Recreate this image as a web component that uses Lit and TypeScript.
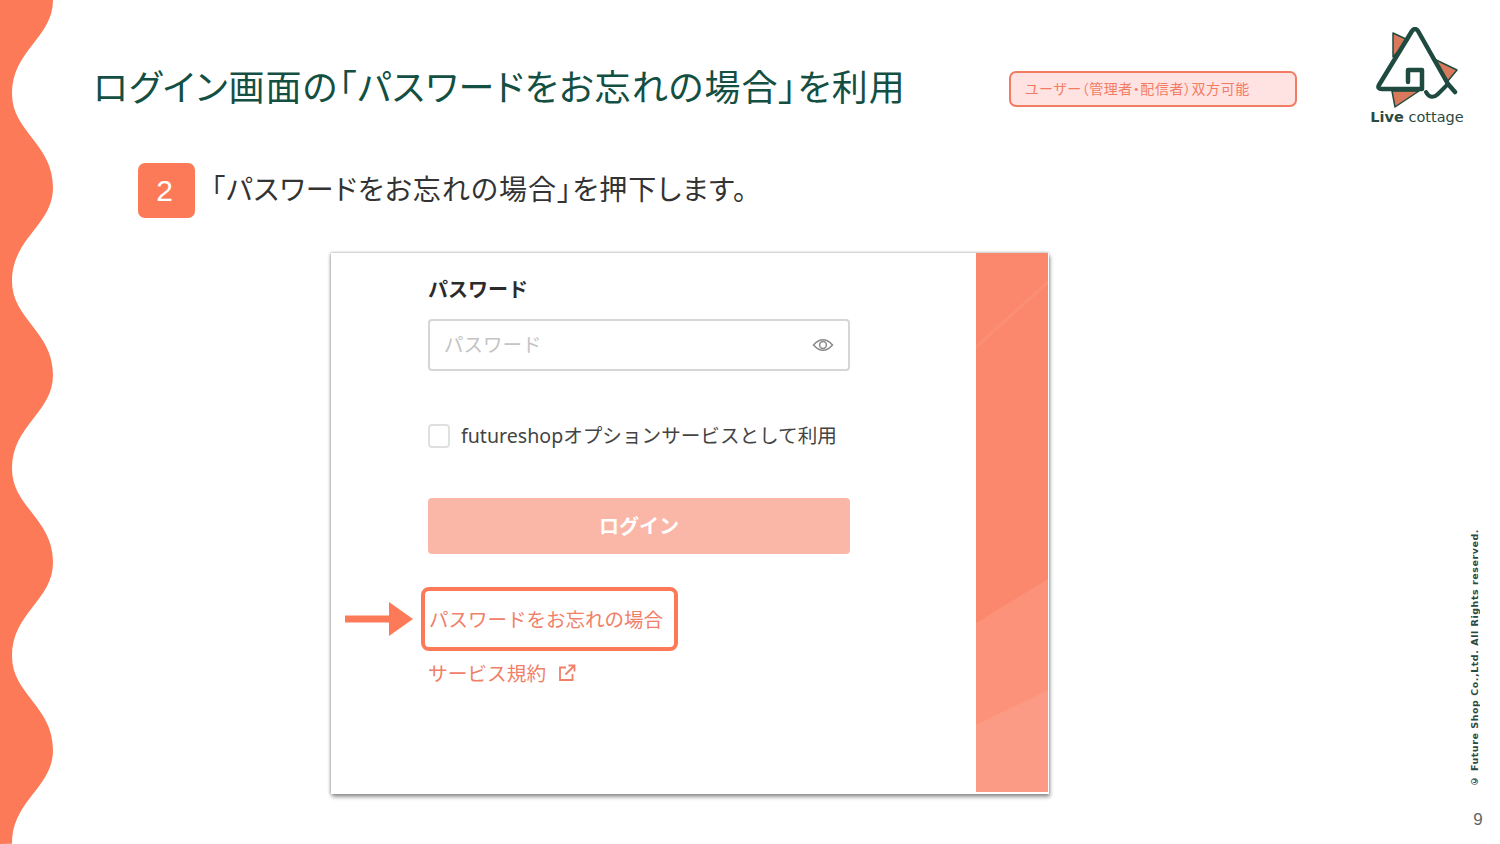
import { css, html, svg, LitElement } from 'lit';
import { customElement } from 'lit/decorators.js';

const wavePath = () => {
  // one bulge every 187.5px, from x=53 out to x=12 and back
  let d = 'M0 0 L53 0';
  for (let i = 0; i < 9; i++) {
    const y = i * 93.75;
    const out = i % 2 === 0;
    const from = out ? 53 : 12;
    const to = out ? 12 : 53;
    d += ` C${from} ${y + 38} ${to} ${y + 50} ${to} ${y + 93.75}`;
  }
  return d + ' L0 844 Z';
};

@customElement('app-root')
export class AppRoot extends LitElement {
  render() {
    return html`
      <svg class="wave" width="60" height="844" viewBox="0 0 60 844">
        ${svg`<path d=${wavePath()} fill="#fd7a58"></path>`}
      </svg>

      <header class="head">
        <h1>ログイン画面の「パスワードをお忘れの場合」を利用</h1>
        <span class="pill">ユーザー（管理者・配信者）双方可能</span>
        <div class="logo">
          <svg width="90" height="84" viewBox="0 0 90 84">
            <path d="M21 6 L36 13 L21 30 Z" fill="#d9795c" stroke="#1f4a40" stroke-width="1.5" stroke-linejoin="round"></path>
            <path d="M60 31 L85 43 L75 55 Z" fill="#d9795c" stroke="#1f4a40" stroke-width="1.5" stroke-linejoin="round"></path>
            <path d="M20 64 L23 80 L47 64 Z" fill="#d9795c" stroke="#1f4a40" stroke-width="1.5" stroke-linejoin="round"></path>
            <path d="M36 55 L36 43 L50 43 L50 62 L10 62 Q5 62 7 58 L40 4 Q43 0 46 4 L76 57 L83 65" fill="none" stroke="#1f4a40" stroke-width="4.5" stroke-linecap="round" stroke-linejoin="round"></path>
            <path d="M54 65 C57 71 62 71 66 67 L75 58" fill="none" stroke="#1f4a40" stroke-width="4" stroke-linecap="round" stroke-linejoin="round"></path>
          </svg>
          <div class="logo-name"><b>Live</b> cottage</div>
        </div>
      </header>

      <div class="step">
        <span class="num">2</span>
        <p>「パスワードをお忘れの場合」を押下します。</p>
      </div>

      <div class="shot-row">
        <section class="shot">
          <div class="form">
            <div class="label">パスワード</div>
            <div class="input">
              <span>パスワード</span>
              <svg width="22" height="16" viewBox="0 0 22 16">
                <path d="M1.5 8 Q11 -2.5 20.5 8 Q11 18.5 1.5 8 Z" fill="none" stroke="#8a8a8a" stroke-width="1.5"></path>
                <circle cx="11" cy="8" r="3.4" fill="none" stroke="#8a8a8a" stroke-width="1.5"></circle>
              </svg>
            </div>
            <label class="check"><i></i>futureshopオプションサービスとして利用</label>
            <div class="btn">ログイン</div>
            <div class="forgot-row">
              <svg class="arrow" width="68" height="34" viewBox="0 0 68 34">
                <path d="M0 13.5 H44 V0 L68 17 L44 34 V20.5 H0 Z" fill="#fd7a58"></path>
              </svg>
              <div class="forgot">パスワードをお忘れの場合</div>
            </div>
            <div class="terms">
              サービス規約
              <svg width="18" height="18" viewBox="0 0 18 18">
                <path d="M8 3.5 H2 V16 H14.5 V10 M7.5 10.5 L16 2 M10.5 1.5 H16.5 V7.5" fill="none" stroke="#f0806a" stroke-width="1.8"></path>
              </svg>
            </div>
          </div>
          <svg class="band" width="72" height="539" viewBox="0 0 72 539">
            <rect width="72" height="539" fill="#fb886c"></rect>
            <path d="M0 92 L72 27 L72 31 L0 96 Z" fill="#fff" opacity="0.06"></path>
            <path d="M0 370 L72 326 L72 539 L0 539 Z" fill="#fff" opacity="0.09"></path>
            <path d="M0 472 L72 437 L72 539 L0 539 Z" fill="#fff" opacity="0.09"></path>
          </svg>
        </section>
      </div>

      <footer class="foot">
        <small class="copy">© Future Shop Co.,Ltd. All Rights reserved.</small>
        <span class="page">9</span>
      </footer>
    `;
  }

  static styles = css`
    :host {
      display: flex;
      flex-direction: column;
      position: relative;
      width: 1500px;
      height: 844px;
      overflow: hidden;
      background: #fff;
      font-family: "Noto Sans CJK JP", "Liberation Sans", sans-serif;
    }
    .wave {
      position: absolute;
      left: 0;
      top: 0;
    }
    .head {
      display: flex;
      align-items: flex-start;
      height: 163px;
      padding: 27px 0 0 93px;
      box-sizing: border-box;
    }
    h1 {
      width: 916px;
      margin: 33px 0 0;
      font-size: 36px;
      line-height: 50px;
      font-weight: 400;
      letter-spacing: 1.03px;
      color: #134f42;
      white-space: nowrap;
      font-feature-settings: "palt";
    }
    .pill {
      width: 288px;
      height: 36px;
      margin-top: 44px;
      padding-left: 14px;
      box-sizing: border-box;
      border: 2px solid #f27c63;
      border-radius: 7px;
      background: #ffe3e3;
      color: #f27c63;
      font-size: 14px;
      line-height: 31px;
      letter-spacing: 0.55px;
      white-space: nowrap;
      font-feature-settings: "palt";
    }
    .logo {
      display: flex;
      flex-direction: column;
      align-items: center;
      width: 100px;
      margin-left: 70px;
    }
    .logo svg {
      display: block;
    }
    .logo-name {
      margin-top: -1px;
      font-family: "DejaVu Sans", sans-serif;
      font-size: 14.5px;
      line-height: 14px;
      color: #2b4a42;
      white-space: nowrap;
    }
    .step {
      display: flex;
      gap: 16px;
      padding-left: 138px;
      height: 90px;
      align-items: flex-start;
    }
    .num {
      width: 57px;
      height: 55px;
      padding-right: 4px;
      box-sizing: border-box;
      border-radius: 7px;
      background: #fd7a58;
      color: #fff;
      font-family: "Liberation Sans", sans-serif;
      font-size: 30px;
      line-height: 55px;
      text-align: center;
    }
    .step p {
      margin: 0;
      font-size: 28px;
      line-height: 50px;
      letter-spacing: 1.1px;
      color: #333;
      white-space: nowrap;
      font-feature-settings: "palt";
    }
    .shot-row {
      padding-left: 331px;
    }
    .shot {
      display: flex;
      justify-content: space-between;
      align-items: flex-start;
      width: 718px;
      height: 541px;
      background: #fff;
      box-shadow: 1px 3px 4px rgba(0, 0, 0, 0.4), -1px 0 3px rgba(0, 0, 0, 0.22), 0 -1px 2px rgba(0, 0, 0, 0.1);
    }
    .form {
      display: flex;
      flex-direction: column;
      width: 422px;
      margin-left: 97px;
    }
    .label {
      margin-top: 21px;
      font-size: 20px;
      line-height: 30px;
      font-weight: 700;
      color: #2b2b2b;
    }
    .input {
      display: flex;
      align-items: center;
      justify-content: space-between;
      height: 52px;
      margin-top: 15px;
      padding: 0 14px 4px 14px;
      box-sizing: border-box;
      border: 2px solid #d6d6d6;
      border-radius: 4px;
      color: #c4c4c4;
      font-size: 19.5px;
    }
    .input svg {
      margin-top: 4px;
    }
    .check {
      display: flex;
      align-items: center;
      gap: 11px;
      margin-top: 50px;
      font-family: "Noto Sans", "Noto Sans CJK JP", sans-serif;
      font-size: 19.6px;
      line-height: 30px;
      color: #444;
      white-space: nowrap;
    }
    .check i {
      width: 22px;
      height: 24px;
      box-sizing: border-box;
      border: 2px solid #e0e0e0;
      border-radius: 4px;
    }
    .btn {
      height: 56px;
      margin-top: 47px;
      border-radius: 4px;
      background: #fab7a7;
      color: #fff;
      font-size: 20px;
      font-weight: 700;
      line-height: 56px;
      text-align: center;
    }
    .forgot-row {
      display: flex;
      align-items: center;
      gap: 8px;
      margin: 33px 0 0 -83px;
    }
    .forgot {
      width: 257px;
      height: 64px;
      padding-left: 4px;
      box-sizing: border-box;
      border: 4px solid #fd7a58;
      border-radius: 8px;
      color: #f0806a;
      font-size: 19.5px;
      line-height: 56px;
      white-space: nowrap;
    }
    .terms {
      display: flex;
      align-items: center;
      gap: 12px;
      margin-top: 7px;
      color: #f0806a;
      font-size: 19.7px;
      line-height: 30px;
    }
    .band {
      display: block;
      margin-right: 1px;
    }
    .foot {
      position: absolute;
      right: 13px;
      bottom: 15px;
      display: flex;
      flex-direction: column;
      align-items: center;
      gap: 24px;
    }
    .copy {
      margin-right: 7px;
      writing-mode: vertical-rl;
      transform: rotate(180deg);
      font-family: "DejaVu Sans", sans-serif;
      font-size: 9.5px;
      font-weight: 700;
      color: #2b4a42;
      letter-spacing: 0.55px;
      white-space: nowrap;
    }
    .page {
      font-family: "Liberation Sans", sans-serif;
      font-size: 17px;
      line-height: 18px;
      color: #666;
    }
  `;
}

declare global {
  interface HTMLElementTagNameMap {
    'app-root': AppRoot;
  }
}
